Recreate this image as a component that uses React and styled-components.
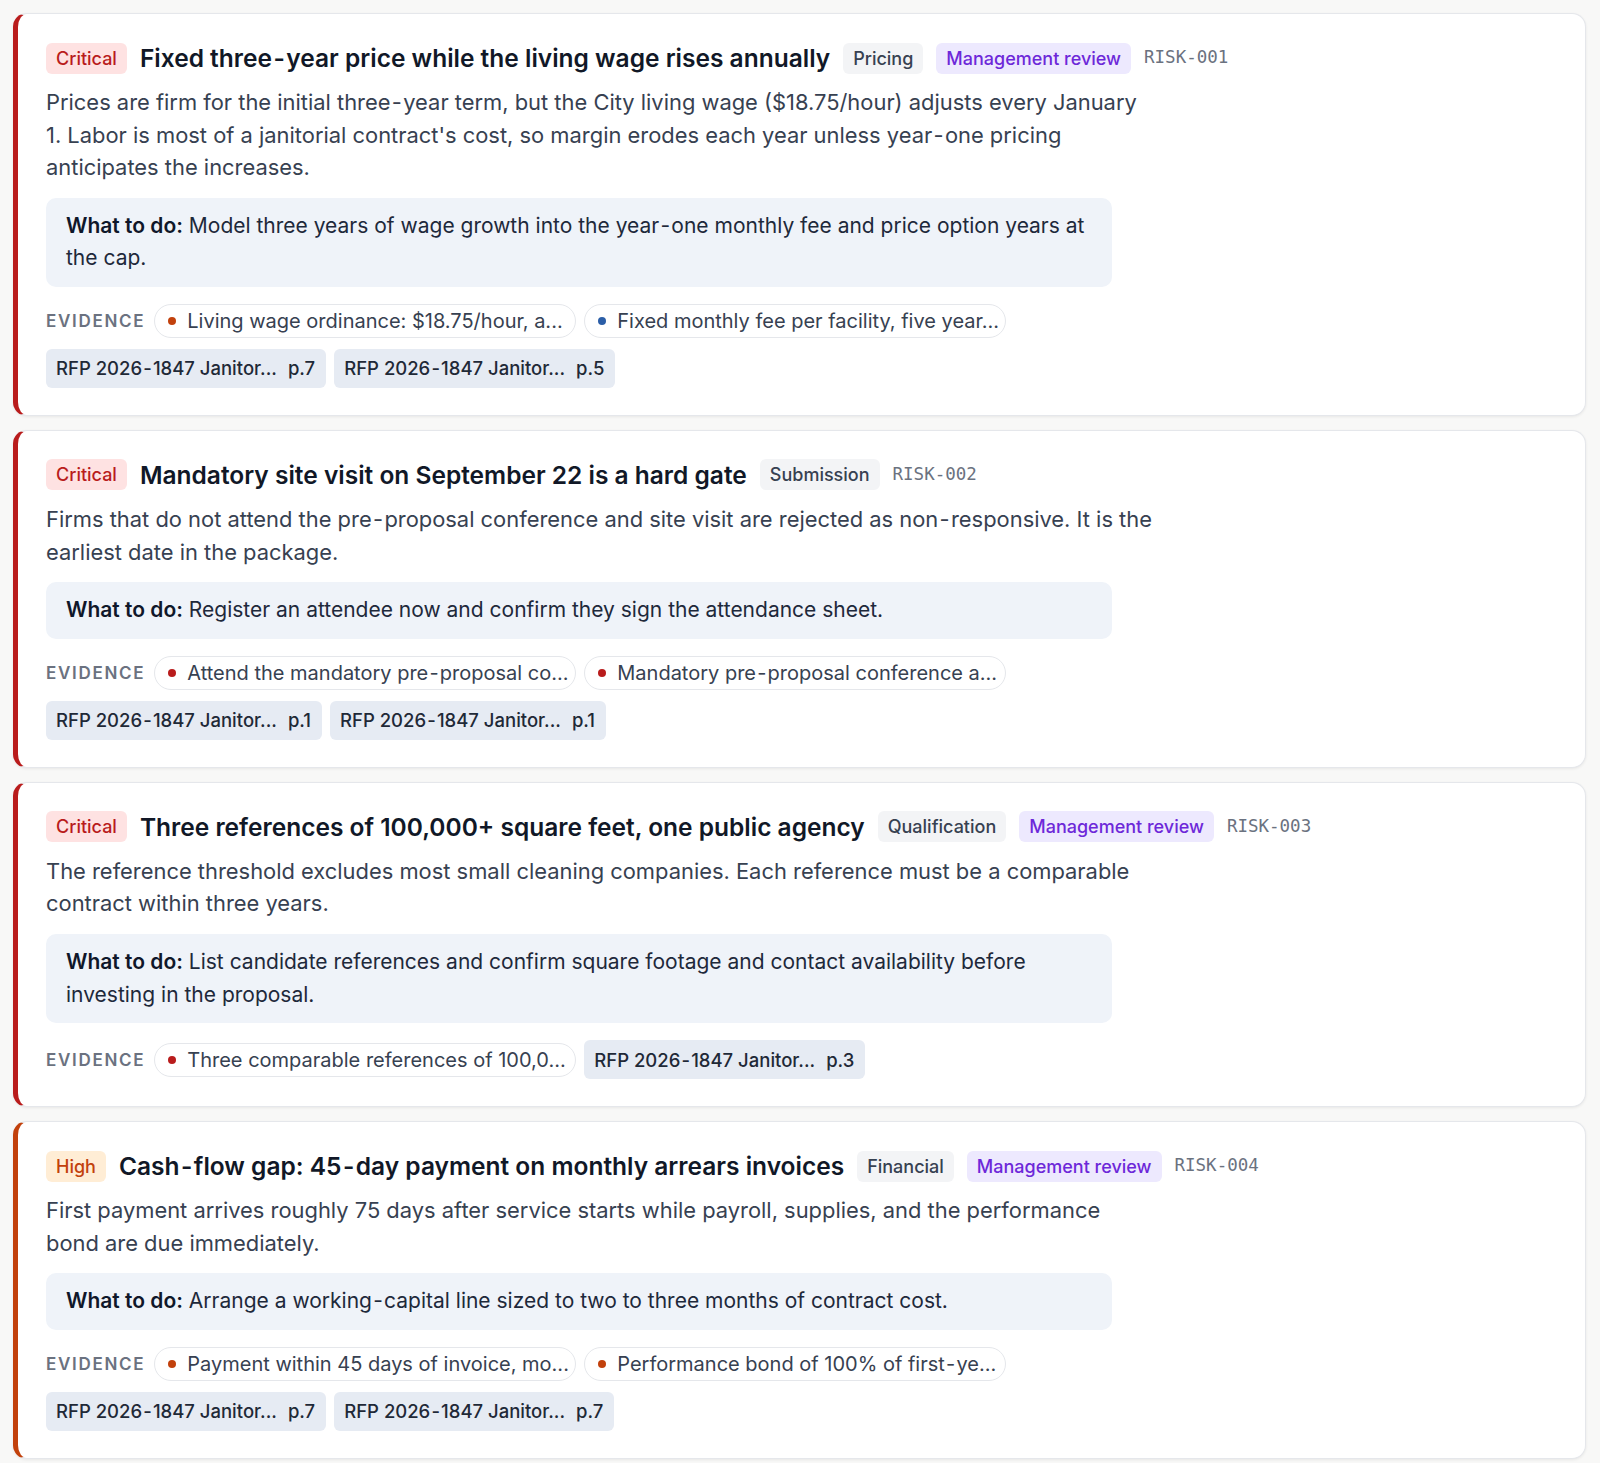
import React from "react";
import styled, { createGlobalStyle } from "styled-components";

const GlobalStyle = createGlobalStyle`
  * { box-sizing: border-box; }
  html, body { margin: 0; padding: 0; }
  body {
    background: #f8f8f7;
    font-family: Inter, "Noto Sans", "Liberation Sans", sans-serif;
    color: #111827;
  }
`;

const severityColors = {
  Critical: { line: "#b91c1c", bg: "#fee2e2", fg: "#b91c1c" },
  High: { line: "#c2410c", bg: "#ffedd5", fg: "#c2410c" },
};

const dotColors = {
  red: "#b91c1c",
  orange: "#c2410c",
  blue: "#2b5ea7",
};

const risks = [
  {
    id: "RISK-001",
    severity: "Critical",
    title: "Fixed three-year price while the living wage rises annually",
    category: "Pricing",
    review: true,
    description:
      "Prices are firm for the initial three-year term, but the City living wage ($18.75/hour) adjusts every January 1. Labor is most of a janitorial contract's cost, so margin erodes each year unless year-one pricing anticipates the increases.",
    action:
      "Model three years of wage growth into the year-one monthly fee and price option years at the cap.",
    evidence: [
      { tone: "orange", text: "Living wage ordinance: $18.75/hour, a..." },
      { tone: "blue", text: "Fixed monthly fee per facility, five year..." },
    ],
    sources: ["p.7", "p.5"],
  },
  {
    id: "RISK-002",
    severity: "Critical",
    title: "Mandatory site visit on September 22 is a hard gate",
    category: "Submission",
    review: false,
    description:
      "Firms that do not attend the pre-proposal conference and site visit are rejected as non-responsive. It is the earliest date in the package.",
    action: "Register an attendee now and confirm they sign the attendance sheet.",
    evidence: [
      { tone: "red", text: "Attend the mandatory pre-proposal co..." },
      { tone: "red", text: "Mandatory pre-proposal conference a..." },
    ],
    sources: ["p.1", "p.1"],
  },
  {
    id: "RISK-003",
    severity: "Critical",
    title: "Three references of 100,000+ square feet, one public agency",
    category: "Qualification",
    review: true,
    description:
      "The reference threshold excludes most small cleaning companies. Each reference must be a comparable contract within three years.",
    action:
      "List candidate references and confirm square footage and contact availability before investing in the proposal.",
    evidence: [{ tone: "red", text: "Three comparable references of 100,0..." }],
    sources: ["p.3"],
  },
  {
    id: "RISK-004",
    severity: "High",
    title: "Cash-flow gap: 45-day payment on monthly arrears invoices",
    category: "Financial",
    review: true,
    description:
      "First payment arrives roughly 75 days after service starts while payroll, supplies, and the performance bond are due immediately.",
    action: "Arrange a working-capital line sized to two to three months of contract cost.",
    evidence: [
      { tone: "orange", text: "Payment within 45 days of invoice, mo..." },
      { tone: "orange", text: "Performance bond of 100% of first-ye..." },
    ],
    sources: ["p.7", "p.7"],
  },
];

// the hyphens in this UI sit with a little air on both sides
const Hy = styled.span`
  margin: 0 0.06em;
`;

const spaced = (text) =>
  text.split("-").flatMap((part, i) =>
    i === 0 ? [part] : [<Hy key={i}>-</Hy>, part]
  );

const Page = styled.div`
  display: flex;
  flex-direction: column;
  gap: 14px;
  padding: 13px 14px 6px 13px;
`;

const Card = styled.article`
  background: #ffffff;
  border: 1px solid #e5e7eb;
  border-left: 5px solid ${(p) => p.$line};
  border-radius: 14px;
  box-shadow: 0 1px 3px rgba(0, 0, 0, 0.07);
  padding: 28px 28px 27px 28px;
`;

const TitleRow = styled.div`
  display: flex;
  align-items: center;
  gap: 13px;
  flex-wrap: wrap;
`;

const Badge = styled.span`
  display: inline-flex;
  align-items: center;
  height: 31px;
  padding: 0 10px;
  border-radius: 6px;
  font-size: 18px;
  font-weight: 500;
  background: ${(p) => p.$bg};
  color: ${(p) => p.$fg};
`;

const Title = styled.h3`
  margin: 0;
  font-size: 24.5px;
  line-height: 32px;
  font-weight: 600;
  color: #111827;
`;

const RiskId = styled.span`
  font-family: "DejaVu Sans Mono", "Liberation Mono", monospace;
  font-size: 17.5px;
  color: #6b7280;
  margin-top: -2px;
`;

const Description = styled.p`
  margin: 12px 0 0;
  max-width: 1107px;
  font-size: 21.9px;
  line-height: 32.6px;
  color: #374151;
`;

const ActionBox = styled.div`
  margin-top: 14px;
  max-width: 1066px;
  background: #eff3f9;
  border-radius: 10px;
  padding: 12px 20px;
  font-size: 21px;
  line-height: 32.6px;
  color: #1e293b;

  strong {
    font-weight: 600;
    color: #0f172a;
  }
`;

const EvidenceRow = styled.div`
  margin-top: 17px;
  max-width: 1120px;
  display: flex;
  flex-wrap: wrap;
  align-items: center;
  column-gap: 8px;
  row-gap: 11px;
`;

const EvidenceLabel = styled.span`
  font-size: 17px;
  font-weight: 600;
  letter-spacing: 0.1em;
  color: #6b7280;
  text-transform: uppercase;
  margin-right: 1px;
`;

const Pill = styled.span`
  display: inline-flex;
  align-items: center;
  gap: 11px;
  width: 422px;
  height: 34px;
  padding: 0 14px 0 13px;
  border: 1px solid #e5e7eb;
  border-radius: 999px;
  background: #ffffff;
  font-size: 20px;
  color: #374151;
  white-space: nowrap;
  overflow: hidden;
`;

const Dot = styled.span`
  flex: none;
  width: 8px;
  height: 8px;
  border-radius: 50%;
  background: ${(p) => p.$color};
`;

const Source = styled.span`
  display: inline-flex;
  align-items: center;
  gap: 11px;
  height: 39px;
  padding: 0 11px 0 10px;
  border-radius: 6px;
  background: #e6ebf3;
  font-size: 18.5px;
  font-weight: 500;
  color: #1f2937;
  white-space: nowrap;
`;

const RiskCard = ({ risk }) => {
  const sev = severityColors[risk.severity];
  return (
    <Card $line={sev.line}>
      <TitleRow>
        <Badge $bg={sev.bg} $fg={sev.fg}>{risk.severity}</Badge>
        <Title>{spaced(risk.title)}</Title>
        <Badge $bg="#f3f4f6" $fg="#374151">{risk.category}</Badge>
        {risk.review && (
          <Badge $bg="#ede9fe" $fg="#6d28d9">Management review</Badge>
        )}
        <RiskId>{risk.id}</RiskId>
      </TitleRow>
      <Description>{spaced(risk.description)}</Description>
      <ActionBox>
        <strong>What to do:</strong> {spaced(risk.action)}
      </ActionBox>
      <EvidenceRow>
        <EvidenceLabel>Evidence</EvidenceLabel>
        {risk.evidence.map((e, i) => (
          <Pill key={i}>
            <Dot $color={dotColors[e.tone]} />
            <span>{spaced(e.text)}</span>
          </Pill>
        ))}
        {risk.sources.map((p, i) => (
          <Source key={"s" + i}>
            <span>{spaced("RFP 2026-1847 Janitor...")}</span>
            <span>{p}</span>
          </Source>
        ))}
      </EvidenceRow>
    </Card>
  );
};

const App = () => (
  <>
    <GlobalStyle />
    <Page>
      {risks.map((r) => (
        <RiskCard key={r.id} risk={r} />
      ))}
    </Page>
  </>
);

export default App;
